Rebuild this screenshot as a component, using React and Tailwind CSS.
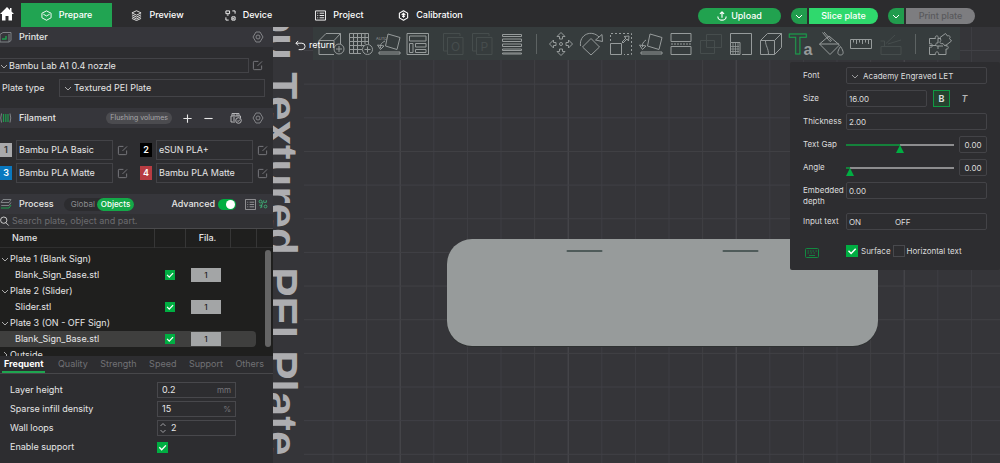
import React, { useState } from 'react';

const Chevron = ({ className = '', d = 'M1 3l3 3 3-3' }) => (
  <svg viewBox="0 0 8 8" className={`size-2 shrink-0 ${className}`} fill="none" stroke="currentColor">
    <path d={d} />
  </svg>
);

const Small = ({ children, className = 'size-[11px]', box = '0 0 12 12' }) => (
  <svg viewBox={box} className={`shrink-0 ${className}`} fill="none" stroke="currentColor" strokeLinejoin="round">
    {children}
  </svg>
);

const EditIcon = () => (
  <Small className="size-[11px] text-[#85868a]">
    <path d="M7 1.5H2.5a1 1 0 0 0-1 1v7a1 1 0 0 0 1 1h7a1 1 0 0 0 1-1V6M6 6.5L11 1.5" strokeWidth="0.9" />
  </Small>
);

const GearIcon = () => (
  <Small className="size-3 text-[#8b8c90]">
    <path d="M4 1h4l1.2 2 1.8 3-1.8 3L8 11H4L2.8 9 1 6l1.8-3z" strokeWidth="0.9" />
    <circle cx="6" cy="6" r="2" strokeWidth="0.9" />
  </Small>
);

const Check = ({ size = 'size-[10px]', defaultChecked = true, ...rest }) => (
  <span className="inline-grid align-middle">
    <input
      type="checkbox"
      defaultChecked={defaultChecked}
      className={`peer col-start-1 row-start-1 appearance-none border border-[#48494d] checked:border-[#00ae42] checked:bg-[#00ae42] ${size}`}
      {...rest}
    />
    <svg
      viewBox="0 0 12 12"
      className={`pointer-events-none invisible col-start-1 row-start-1 peer-checked:visible ${size}`}
      fill="none"
      stroke="white"
      strokeWidth="1.5"
    >
      <path d="M2.5 5.8l2.6 2.7 4.6-4.8" />
    </svg>
  </span>
);

const navTabs = [
  {
    name: 'Prepare',
    icon: <path d="M6 1l5 2.500v5L6 11.200 1 8.500V3.500zM2.500 4.500L6 6.500 9.500 4.500" />,
  },
  {
    name: 'Preview',
    icon: <path d="M6 .8l5 2.400-5 2.400-5-2.400zM1 5.300l5 2.400 5-2.400M1 7.300l5 2.400 5-2.400M1 9.200l5 2.300 5-2.300" strokeWidth="0.9" />,
  },
  {
    name: 'Device',
    icon: <path d="M1 1h4v3H1zM2 5.500h2M7.500 7.500h3.500v3.500H7.500zM8 1h3v3M1 8v3h3M8 9.500h2" />,
  },
  {
    name: 'Project',
    icon: <path d="M.5 1h11v10H.5zM2.500 3.500h1M5 3.500h5M2.500 6h1M5 6h5M2.500 8.500h1M5 8.500h5" />,
  },
  {
    name: 'Calibration',
    icon: <path d="M6 .8l4.500 2.600v5.200L6 11.200 1.500 8.600V3.400zM6 3.500v5M4 5.500l2-2 2 2M4.500 7h3" strokeWidth="1.2" />,
  },
];

const SplitButton = ({ label, className }) => (
  <div className="flex h-4 gap-0.5">
    <button aria-label={`${label} options`} className="flex w-4 items-center justify-center rounded-l-full bg-[#219c4d]">
      <Chevron />
    </button>
    <button className={`w-[69px] rounded-r-full ${className}`}>{label}</button>
  </div>
);

const Header = ({ tab, onTabChange }) => (
  <header className="flex h-[27px] shrink-0 items-center bg-[#2c2c2e] font-medium text-white">
    <a href="#home" aria-label="Home" className="w-[21px]">
      <svg viewBox="0 0 14 14" className="size-[14px]" fill="white">
        <path d="M7 0L0 7h2v6.500h3.500V9h3v4.500H12V7h2l-2.500-2.500V1H10v2z" />
      </svg>
    </a>
    <nav className="flex self-end">
      {navTabs.map((t) => (
        <button
          key={t.name}
          onClick={() => onTabChange(t.name)}
          className={`flex h-6 w-[91px] items-center justify-center gap-[7px] ${tab === t.name ? 'bg-[#21a452]' : ''}`}
        >
          <Small>{t.icon}</Small>
          {t.name}
        </button>
      ))}
    </nav>
    <div className="mt-1 mr-[25px] ml-auto flex gap-2.5">
      <button className="flex h-4 w-[83px] items-center justify-center gap-1 rounded-full bg-[#21a24f]">
        <Small className="size-[10px]">
          <path d="M6 8V1.500M3.500 3.500L6 1l2.500 2.500M1 6.500a5 4.500 0 0 0 10 0" strokeWidth="1.4" />
        </Small>
        Upload
      </button>
      <SplitButton label="Slice plate" className="bg-[#2fd96d] text-white" />
      <SplitButton label="Print plate" className="bg-[#7d7d80] text-[#59595c]" />
    </div>
  </header>
);

const SectionBar = ({ icon, title, end = 'pr-[9px]', children }) => (
  <div className={`flex h-5 items-center bg-[#36363b] ${end}`}>
    <Small className="mr-[7px] size-3 text-[#7f8286]">{icon}</Small>
    <h2 className="font-medium">{title}</h2>
    {children}
  </div>
);

const filaments = [
  { id: 1, name: 'Bambu PLA Basic', color: 'bg-[#a9a9ab] text-[#333]' },
  { id: 2, name: 'eSUN PLA+', color: 'bg-black text-white' },
  { id: 3, name: 'Bambu PLA Matte', color: 'bg-[#0a78bf] text-white' },
  { id: 4, name: 'Bambu PLA Matte', color: 'bg-[#b73c42] text-white' },
];

const plates = [
  { name: 'Plate 1 (Blank Sign)', object: 'Blank_Sign_Base.stl' },
  { name: 'Plate 2 (Slider)', object: 'Slider.stl' },
  { name: 'Plate 3 (ON - OFF Sign)', object: 'Blank_Sign_Base.stl', selected: true },
];

const ObjectList = () => (
  <div className="relative h-[127px] overflow-hidden bg-[#1f1f1e]">
    <table className="w-full table-fixed border-collapse text-left">
      <colgroup>
        <col />
        <col className="w-[31px]" />
        <col className="w-[45px]" />
        <col className="w-[26px]" />
        <col className="w-[17px]" />
      </colgroup>
      <thead>
        <tr className="h-[18px] border-b border-[#2f2f2f]">
          <th className="py-0 pl-3 font-medium">Name</th>
          <th aria-label="Printable" className="border-l border-[#363636] p-0" />
          <th className="border-l border-[#363636] p-0 text-center font-medium">Fila.</th>
          <th aria-label="Settings" className="border-l border-[#363636] p-0" />
          <th aria-label="More" className="border-l border-[#363636] p-0" />
        </tr>
      </thead>
      <tbody>
        <tr className="h-1">
          <td colSpan={5} className="p-0" />
        </tr>
        {plates.map((p) => (
          <React.Fragment key={p.name}>
            <tr className="h-4">
              <td colSpan={5} className="p-0">
                <button className="flex items-center pl-px">
                  <Chevron className="mr-px text-[#aaa]" />
                  {p.name}
                </button>
              </td>
            </tr>
            <tr className="h-4">
              <td className={`py-0 pl-[15px] ${p.selected ? 'bg-[#3f3f3e]' : ''}`}>{p.object}</td>
              <td className={`p-0 text-center leading-none ${p.selected ? 'bg-[#3f3f3e]' : ''}`}>
                <Check aria-label={`Print ${p.object}`} />
              </td>
              <td className={`py-0 pr-0 pl-1.5 ${p.selected ? 'bg-[#3f3f3e]' : ''}`}>
                <button className="block h-[14px] w-[30px] bg-[#a3a5a6] text-[8px] font-medium text-[#222]">1</button>
              </td>
              <td className={`p-0 ${p.selected ? 'rounded-r bg-[#3f3f3e]' : ''}`} />
              <td className="p-0" />
            </tr>
          </React.Fragment>
        ))}
        <tr className="h-4">
          <td colSpan={5} className="p-0">
            <button className="flex items-center pl-px">
              <Chevron d="M3 1l3 3-3 3" className="mr-px text-[#aaa]" />
              Outside
            </button>
          </td>
        </tr>
      </tbody>
    </table>
    {/* scroll thumb */}
    <div className="absolute top-[21px] right-0.5 h-[97px] w-1.5 rounded-full bg-[#656565]" />
  </div>
);

const settingTabs = ['Frequent', 'Quality', 'Strength', 'Speed', 'Support', 'Others'];

const Sidebar = () => {
  const [tab, setTab] = useState('Frequent');
  return (
    <aside className="flex w-[273px] shrink-0 flex-col bg-[#2d2d30] text-[#e6e6e6]">
      <SectionBar
        title="Printer"
        icon={
          <>
            <path d="M0 3.500L3 1.500h8v8l-2 1.500H0zM9 11V3" />
            <path d="M2 8h4V5" stroke="#1f9d4e" strokeWidth="1.5" />
          </>
        }
      >
        <button aria-label="Printer settings" className="ml-auto">
          <GearIcon />
        </button>
      </SectionBar>
      <div className="pt-[11px] pb-[11px]">
        <div className="flex h-[15px] items-center gap-[3px]">
          <div className="flex h-full w-[249px] items-center border border-l-0 border-[#434347]">
            <Chevron className="text-[#aaa]" />
            <select aria-label="Printer preset" className="flex-1 appearance-none pl-px">
              <option>Bambu Lab A1 0.4 nozzle</option>
            </select>
          </div>
          <button aria-label="Edit printer">
            <EditIcon />
          </button>
        </div>
        <div className="mt-1.5 flex h-[18px] items-center pl-0.5">
          <label htmlFor="plate-type" className="w-[57px]">
            Plate type
          </label>
          <div className="flex h-full w-[206px] items-center border border-[#434347] pl-1">
            <Chevron className="text-[#aaa]" />
            <select id="plate-type" className="flex-1 appearance-none pl-0.5">
              <option>Textured PEI Plate</option>
            </select>
          </div>
        </div>
      </div>

      <SectionBar
        title="Filament"
        icon={
          <>
            <path d="M1.500 1.500q-1.500 4.500 0 9M10 1.500q1.500 4.500 0 9" />
            <path d="M3.500 2v8M5.800 2v8M8 2v8" stroke="#1f9d4e" strokeWidth="1.200" />
          </>
        }
      >
        <button className="ml-auto h-3 rounded-full bg-[#4b4b4f] px-1 text-[7px] leading-3 text-[#a8a8ab]">Flushing volumes</button>
        <button aria-label="Add filament" className="ml-[10px]">
          <Small>
            <path d="M6 1.500v9M1.500 6h9" strokeWidth="1.200" />
          </Small>
        </button>
        <button aria-label="Remove filament" className="ml-[10px]">
          <Small>
            <path d="M1.500 6h9" strokeWidth="1.200" />
          </Small>
        </button>
        <button aria-label="Sync filaments" className="ml-4 text-[#b5b5b8]">
          <Small className="size-3">
            <path d="M2 4V1.500h7V4M1 4h9.500v2M1 4v6h4M3 6h2M3 8h2M4 1.500V4M7 1.500V4" />
            <circle cx="8.500" cy="8.500" r="2.800" />
            <path d="M7.200 8.500l1 1 1.700-1.900" />
          </Small>
        </button>
        <button aria-label="Filament settings" className="ml-[10px]">
          <GearIcon />
        </button>
      </SectionBar>
      <div className="grid grid-cols-[140px_1fr] gap-y-[3px] pt-3 pb-[11px]">
        {filaments.map((f) => (
          <div key={f.id} className="flex h-5 items-center">
            <button className={`h-[14px] w-3 text-[9px] font-semibold leading-[14px] ${f.color}`}>{f.id}</button>
            <select
              aria-label={`Filament ${f.id}`}
              defaultValue={f.name}
              className="ml-1 h-full w-[97px] appearance-none border border-[#434347] px-0.5"
            >
              <option>{f.name}</option>
            </select>
            <button aria-label={`Edit filament ${f.id}`} className="ml-1">
              <EditIcon />
            </button>
          </div>
        ))}
      </div>

      <SectionBar
        title="Process"
        end="pr-[5px]"
        icon={
          <>
            <path d="M3 1.500h8l-2 3H1zM1 7l.5.500H9l2-3" />
            <path d="M1 10h8l2-3" stroke="#1f9d4e" />
          </>
        }
      >
        <div className="ml-[10px] flex h-[13px] items-center rounded-full bg-[#2c2c2f] pl-[7px] text-[8px]">
          <button className="text-[#8b8b8e]">Global</button>
          <button className="ml-0.5 h-full rounded-full bg-[#14a848] px-1 font-medium text-white">Objects</button>
        </div>
        <label htmlFor="advanced" className="ml-auto font-medium">
          Advanced
        </label>
        <input
          id="advanced"
          type="checkbox"
          role="switch"
          defaultChecked
          className="ml-[3px] h-[11px] w-[18px] appearance-none rounded-full bg-[#555] p-px before:block before:size-[9px] before:rounded-full before:bg-white checked:bg-[#00ae42] checked:before:ml-[7px]"
        />
        <button aria-label="Parameter list" className="ml-[9px] text-[#a5a5a8]">
          <Small>
            <path d="M.5.500h11v11H.5zM2.500 3.500h1M5 3.500h5M2.500 6h1M5 6h5M2.500 8.500h1M5 8.500h5" strokeWidth="0.9" />
          </Small>
        </button>
        <button aria-label="Compare presets" className="ml-0.5 text-[#3fb87a]">
          <Small className="size-[10px]">
            <circle cx="3" cy="3" r="1.700" />
            <circle cx="9" cy="9" r="1.700" />
            <path d="M7 1.500L5 6l-2 5M7 4h3V1.500M1.500 7.500h3v3" />
          </Small>
        </button>
      </SectionBar>
      <div className="flex h-[15px] items-center border-b border-[#4a4a4c] bg-[#313134]">
        <Small className="size-[10px]" box="2 0 12 12">
          <circle cx="6.500" cy="5" r="3.800" />
          <path d="M9 8l3.500 3.500" />
        </Small>
        <input
          type="search"
          aria-label="Search"
          placeholder="Search plate, object and part."
          className="flex-1 pl-0.5 placeholder:text-[#6c6c70]"
        />
      </div>

      <ObjectList />

      <div role="tablist" className="flex h-[18px] justify-between border-b border-[#47474a] pr-[9px] pl-0.5">
        {settingTabs.map((t) => (
          <button
            key={t}
            role="tab"
            aria-selected={tab === t}
            onClick={() => setTab(t)}
            className={`border-b-2 ${tab === t ? 'border-[#1ea54f] px-0.5 font-bold text-white' : 'border-transparent text-[#717175]'}`}
          >
            {t}
          </button>
        ))}
      </div>
      <div className="flex flex-col gap-[3px] pt-2 pb-2 pl-[10px]">
        <div className="flex h-4 items-center">
          <label htmlFor="layer-height" className="w-[147px]">
            Layer height
          </label>
          <div className="flex h-full w-[79px] items-center border border-[#48484c] px-1">
            <input id="layer-height" defaultValue="0.2" className="min-w-0 flex-1" />
            <span className="text-[8px] text-[#77777b]">mm</span>
          </div>
        </div>
        <div className="flex h-4 items-center">
          <label htmlFor="infill" className="w-[147px]">
            Sparse infill density
          </label>
          <div className="flex h-full w-[79px] items-center border border-[#48484c] px-1">
            <input id="infill" defaultValue="15" className="min-w-0 flex-1" />
            <span className="text-[8px] text-[#77777b]">%</span>
          </div>
        </div>
        <div className="flex h-4 items-center">
          <label htmlFor="wall-loops" className="w-[147px]">
            Wall loops
          </label>
          <div className="flex h-full w-[79px] items-center border border-[#48484c] pl-px">
            <Small className="mr-1 h-3 w-2 text-[#a0a0a3]" box="0 0 8 12">
              <path d="M1.500 4L4 1.500 6.500 4M1.500 8L4 10.500 6.500 8" />
            </Small>
            <input id="wall-loops" defaultValue="2" className="min-w-0 flex-1" />
          </div>
        </div>
        <div className="flex h-4 items-center">
          <label htmlFor="support" className="w-[147px]">
            Enable support
          </label>
          <Check id="support" size="size-[11px]" />
        </div>
      </div>
    </aside>
  );
};

const Tool = ({ label, dim, children }) => (
  <button aria-label={label} className={dim ? 'text-[#464d4d]' : 'text-[#969b9b]'}>
    <svg viewBox="0 0 24 24" className="size-6 overflow-visible" fill="none" stroke="currentColor">
      {children}
    </svg>
  </button>
);

const Toolbar = () => (
  <div className="relative mr-10 ml-10 flex h-[33px] items-center bg-[#363c3d] pl-1.5">
    <div className="flex gap-[5px]">
      <Tool label="Add">
        <path d="M15 22.500H0V8.500h15v5M0 8.500L7 1.500h14.500L15 8.500M21.500 1.500V12" />
        <circle cx="20" cy="17" r="5" />
        <path d="M20 14v6M17 17h6" />
      </Tool>
      <Tool label="Add plate">
        <path d="M13 21.500H1.500v-20h19V12M1.500 5.500h19M1.500 9.500h19M1.500 13.500H16M1.500 17.500H14M5.500 1.500v20M9.500 1.500v20M13.500 1.500v13M17 1.500V12" />
        <circle cx="19.500" cy="17.500" r="5" />
        <path d="M19.500 14.500v6M16.500 17.500h6" />
      </Tool>
      <Tool label="Auto orient">
        <path d="M11 2l12 3.500-3 12L8.500 14zM2 22h21v-2H2zM8 9c-4 2-5 4-4.500 7M.5 13l3 4.500L7 14z" />
        <text x="-1" y="7.500" fontSize="4" fill="currentColor" stroke="none">AUTO</text>
      </Tool>
      <Tool label="Arrange">
        <path d="M1 1.500h21.500v21H1zM3.500 4h16.500v5H3.500zM3.500 11.500h3.500v9H3.500zM9.500 11.500H20V15H9.500zM9.500 17.500H20v3H9.500z" />
      </Tool>
    </div>
    <div className="ml-3 flex gap-[5px]">
      <Tool label="Split to objects" dim>
        <path d="M18 4V1.500H1.500V19H5M5.500 5.500H21v17H5.500z" />
        <text x="9" y="18.500" fontSize="12" fill="currentColor" stroke="none">O</text>
      </Tool>
      <Tool label="Split to parts" dim>
        <path d="M18 4V1.500H1.500V19H5M5.500 5.500H21v17H5.500z" />
        <text x="9.500" y="18.500" fontSize="12" fill="currentColor" stroke="none">P</text>
      </Tool>
      <Tool label="Variable layer height">
        <path d="M2.500 2.500h19v2h-19zM2.500 7h19v2.500h-19zM2.500 12h19v2.500h-19zM2.500 17h19v1.500h-19zM2.500 21h19v1h-19z" />
      </Tool>
    </div>
    <div className="mx-3 h-5 w-px bg-[#5d6363]" />
    <div className="flex gap-1.5">
      <Tool label="Move">
        <circle cx="12" cy="12" r="1.500" />
        <path d="M12 .5l4 4h-2.500v2.500h-3V4.500H8zM12 23.500l4-4h-2.500V17h-3v2.500H8zM.5 12l4-4v2.500H7v3H4.500V16zM23.500 12l-4-4v2.500H17v3h2.500V16z" />
      </Tool>
      <Tool label="Rotate">
        <path d="M12 6.500l8.500 8.500L12 23 3.500 15zM1.500 14C0 2 13-2.500 20 5M23 2.500l.5 7-7-1.500z" />
      </Tool>
      <Tool label="Scale">
        <path d="M1.500 11.500h11v11h-11z" />
        <path d="M1.500 9V1.500h21v21H15" strokeDasharray="2 2" />
        <path d="M13 10l4-4-2-1.500 5-.5-.5 5L18 7l-4 4z" />
      </Tool>
      <Tool label="Lay on face">
        <path d="M11 2l12 3.500-3 12L8.500 14zM2 22h21v-2H2zM7 8c-3 2-4 4-3.500 7M.5 13l3 4.500L7 14z" />
      </Tool>
      <Tool label="Cut">
        <path d="M2 1.500h20v8H2zM2 14.500h20v8H2z" />
        <path d="M2 12h20" strokeDasharray="2 1" />
      </Tool>
      <Tool label="Mesh boolean" dim>
        <path d="M7.500 2.500h15v13h-15zM1.500 8.500h14v13h-14z" />
      </Tool>
      <Tool label="Support painting">
        <path d="M1.500 10.500v-9h21v21H13M1.500 10.500H11v12H1.500z" />
        <path d="M2 14.500h8M2 17h8M2 19.500h8M4 11v11M6.500 11v11M9 11v11" strokeWidth="0.8" />
      </Tool>
      <Tool label="Seam painting">
        <path d="M1.500 8.500h14v14h-14zM1.500 8.500l7-7h14l-7 7M22.500 1.500v14l-7 7M6.500 9c0 5 3 7 3 13.500" />
      </Tool>
      <Tool label="Text shape">
        <text x="0" y="22" fontSize="29" fontWeight="bold" className="font-['Liberation_Sans',sans-serif]" stroke="#16a04c">T</text>
        <text x="14.500" y="22.500" fontSize="16" fontWeight="bold" className="font-['Liberation_Sans',sans-serif]" fill="currentColor" stroke="none">a</text>
      </Tool>
      <Tool label="Color painting">
        <path d="M10 4l10.500 9L11 22.500.5 12zM.5 12h19.500M3.500.5l7.500 9 1.500-1L5 0M21.500 14.500c3.500 5 3.500 8.500 0 8.500s-3.500-3.500 0-8.500z" />
      </Tool>
      <Tool label="Measure">
        <path d="M1.500 7.500h21v9h-21zM4.500 8v2.500M7.500 8v4M10.500 8v2.500M13.500 8v4M16.500 8v2.500M19.500 8v4" />
      </Tool>
      <Tool label="Assembly" dim>
        <path d="M2 14.500h20v8H2zM7 11.500L16 3M9 12l13-4M1.500 9h4v5" />
      </Tool>
    </div>
    <div className="mx-3 h-5 w-px bg-[#5d6363]" />
    <Tool label="Assembly view">
      <path d="M1.500 6.500h6c-1.500-3.500 4-3.500 2.500 0H13M1.500 6.500V12c4-1.500 4 4.500 0 3v7.500h6c-1-3.500 4-3.500 3 0h7.500V17c3 1 3-4 0-3v-1.500M1.500 13.500H8M10 6.500V11c-3-1-3 4 0 3v3M10 14h5M12 5.500l5.500-4 2 2.500c2-1 3.500 1 2 2.500l2 2.500-6.500 5-2-2.500c-3 1-4-1.500-2-3z" />
    </Tool>
    <button className="absolute top-3 -left-[18px] flex items-center gap-[3px] text-white">
      <Small>
        <path d="M3.500 1L1 3.500 3.500 6M1 3.500h6.500a3.500 3.500 0 0 1 0 7H4" />
      </Small>
      return
    </button>
  </div>
);

const columns = Array.from({ length: 21 }, (_, i) => 333 + i * 33.6);
const rows = Array.from({ length: 13 }, (_, i) => 50.5 + i * 33.65);

const Scene = () => (
  <svg viewBox="273 27 727 436" preserveAspectRatio="xMidYMin slice" className="absolute inset-0 size-full">
    <g>
      {columns.map((x, i) => (
        <line key={x} x1={x} y1="27" x2={x} y2="463" stroke={i % 5 === 2 ? '#4c4c50' : '#3f3f44'} />
      ))}
      {rows.map((y) => (
        <line key={y} x1="304" y1={y} x2="1000" y2={y} stroke="#414146" />
      ))}
    </g>
    <rect x="447" y="239.500" width="431" height="107.500" rx="25" fill="#2e3131" />
    <rect x="447" y="239" width="431" height="107" rx="25" fill="#979b9b" />
    <rect x="566.500" y="250" width="36" height="2" rx="1" fill="#4f5b5a" />
    <rect x="722.500" y="250" width="36" height="2" rx="1" fill="#4f5b5a" />
  </svg>
);

const Row = ({ id, label, children }) => (
  <div className="flex items-start">
    <label htmlFor={id} className="w-[43px] shrink-0 pt-[3px] leading-[11px]">
      {label}
    </label>
    {children}
  </div>
);

const boxClass = 'h-[17px] rounded-xs border border-[#434347] px-0.5';
const sliderClass =
  "h-[17px] w-[108px] appearance-none bg-[length:100%_2px] bg-[position:0_8px] bg-no-repeat [&::-webkit-slider-runnable-track]:h-full [&::-webkit-slider-thumb]:mt-[9px] [&::-webkit-slider-thumb]:h-2 [&::-webkit-slider-thumb]:w-2 [&::-webkit-slider-thumb]:appearance-none [&::-webkit-slider-thumb]:bg-[#00ae42] [&::-webkit-slider-thumb]:[clip-path:polygon(50%_0,100%_100%,0_100%)]";

const TextPanel = () => (
  <div className="absolute top-[35px] right-0 flex w-[210px] flex-col gap-1.5 rounded-xs bg-[#2d2d30] pt-[5px] pr-[13px] pb-3 pl-[13px] text-[8px] text-[#dcdcdc]">
    <Row id="font" label="Font">
      <div className={`flex flex-1 items-center ${boxClass}`}>
        <Chevron className="ml-0.5 text-[#9a9a9c]" />
        <select id="font" className="flex-1 appearance-none pl-1">
          <option>Academy Engraved LET</option>
        </select>
      </div>
    </Row>
    <Row id="size" label="Size">
      <input id="size" defaultValue="16.00" className={`w-[81px] ${boxClass}`} />
      <button aria-label="Bold" className="ml-1.5 size-[17px] border border-[#0f9a42] bg-[#26432f] text-[9px] font-bold">B</button>
      <button aria-label="Italic" className="ml-1.5 size-[17px] text-[9px] font-semibold italic text-[#b5b5b7]">T</button>
    </Row>
    <Row id="thickness" label="Thickness">
      <input id="thickness" defaultValue="2.00" className={`min-w-0 flex-1 ${boxClass}`} />
    </Row>
    <Row id="text-gap" label="Text Gap">
      <input
        id="text-gap"
        type="range"
        min="-100"
        max="100"
        defaultValue="0"
        className={`bg-linear-[90deg,#15813b_50%,#8d8d8f_50%] ${sliderClass}`}
      />
      <input aria-label="Text gap value" defaultValue="0.00" className={`ml-auto w-7 text-center ${boxClass}`} />
    </Row>
    <Row id="angle" label="Angle">
      <input
        id="angle"
        type="range"
        max="360"
        defaultValue="0"
        className={`bg-linear-[90deg,#15813b_4%,#8d8d8f_4%] ${sliderClass}`}
      />
      <input aria-label="Angle value" defaultValue="0.00" className={`ml-auto w-7 text-center ${boxClass}`} />
    </Row>
    <Row id="depth" label="Embedded depth">
      <input id="depth" defaultValue="0.00" className={`min-w-0 flex-1 ${boxClass}`} />
    </Row>
    <Row id="input-text" label="Input text">
      <input id="input-text" defaultValue={'ON'.padEnd(17) + 'OFF'} className={`min-w-0 flex-1 whitespace-pre ${boxClass}`} />
    </Row>
    <div className="mt-2 flex items-center">
      <button aria-label="Shortcuts" className="w-[43px] pt-1 pl-0.5 text-[#128a40]">
        <svg viewBox="0 0 14 10" className="h-[10px] w-[14px]" fill="none" stroke="currentColor">
          <rect x=".5" y=".5" width="13" height="9" rx="1" />
          <path d="M2.500 3h1.500M5 3h1.500M7.500 3H9M10.500 3H12M2.500 5h1.500M5.500 5H7M8.500 5H10M4 7.500h6" strokeWidth="0.9" />
        </svg>
      </button>
      <Check id="surface" size="size-3" />
      <label htmlFor="surface" className="ml-[3px]">
        Surface
      </label>
      <span className="ml-0.5 inline-flex">
        <Check id="horizontal" size="size-3" defaultChecked={false} />
      </span>
      <label htmlFor="horizontal" className="ml-0.5">
        Horizontal text
      </label>
    </div>
  </div>
);

export default function App() {
  const [tab, setTab] = useState('Prepare');
  return (
    <div className="flex min-h-screen flex-col bg-[#2c2c2e] font-['Inter',sans-serif] text-[9px] leading-3">
      <Header tab={tab} onTabChange={setTab} />
      <div className="flex flex-1">
        <Sidebar />
        <main className="relative min-w-0 flex-1 overflow-hidden bg-[#353539]">
          <Scene />
          {/* plate name printed along the left edge of the bed */}
          <div className="absolute bottom-2 -left-[14px] font-['Liberation_Sans',sans-serif] text-[44px] leading-[44px] font-bold whitespace-nowrap text-[#adadb0] [writing-mode:vertical-rl]">
            Bambu Textured PEI Plate
          </div>
          <Toolbar />
          <TextPanel />
        </main>
      </div>
    </div>
  );
}
